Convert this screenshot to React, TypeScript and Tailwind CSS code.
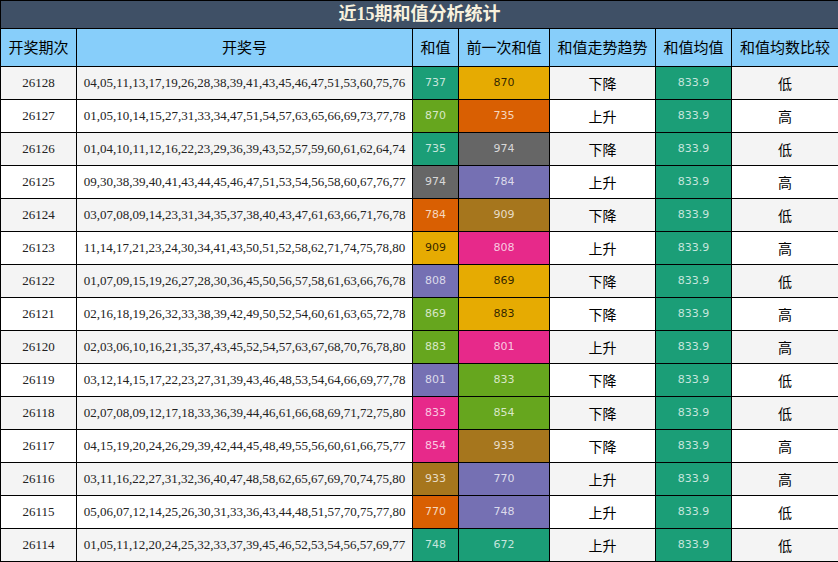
const C = {
  teal: "bg-[#1b9e77]",
  green: "bg-[#66a61e]",
  yellow: "bg-[#e6ab02]",
  orange: "bg-[#d95f02]",
  gray: "bg-[#666666]",
  purple: "bg-[#7570b3]",
  brown: "bg-[#a6761d]",
  pink: "bg-[#e7298a]",
};

type Row = {
  issue: string;
  nums: string;
  sum: number;
  sumBg: string;
  prev: number;
  prevBg: string;
  trend: string;
  cmp: string;
};

const rows: Row[] = [
  { issue: "26128", nums: "04,05,11,13,17,19,26,28,38,39,41,43,45,46,47,51,53,60,75,76", sum: 737, sumBg: C.teal, prev: 870, prevBg: C.yellow, trend: "下降", cmp: "低" },
  { issue: "26127", nums: "01,05,10,14,15,27,31,33,34,47,51,54,57,63,65,66,69,73,77,78", sum: 870, sumBg: C.green, prev: 735, prevBg: C.orange, trend: "上升", cmp: "高" },
  { issue: "26126", nums: "01,04,10,11,12,16,22,23,29,36,39,43,52,57,59,60,61,62,64,74", sum: 735, sumBg: C.teal, prev: 974, prevBg: C.gray, trend: "下降", cmp: "低" },
  { issue: "26125", nums: "09,30,38,39,40,41,43,44,45,46,47,51,53,54,56,58,60,67,76,77", sum: 974, sumBg: C.gray, prev: 784, prevBg: C.purple, trend: "上升", cmp: "高" },
  { issue: "26124", nums: "03,07,08,09,14,23,31,34,35,37,38,40,43,47,61,63,66,71,76,78", sum: 784, sumBg: C.orange, prev: 909, prevBg: C.brown, trend: "下降", cmp: "低" },
  { issue: "26123", nums: "11,14,17,21,23,24,30,34,41,43,50,51,52,58,62,71,74,75,78,80", sum: 909, sumBg: C.yellow, prev: 808, prevBg: C.pink, trend: "上升", cmp: "高" },
  { issue: "26122", nums: "01,07,09,15,19,26,27,28,30,36,45,50,56,57,58,61,63,66,76,78", sum: 808, sumBg: C.purple, prev: 869, prevBg: C.yellow, trend: "下降", cmp: "低" },
  { issue: "26121", nums: "02,16,18,19,26,32,33,38,39,42,49,50,52,54,60,61,63,65,72,78", sum: 869, sumBg: C.green, prev: 883, prevBg: C.yellow, trend: "下降", cmp: "高" },
  { issue: "26120", nums: "02,03,06,10,16,21,35,37,43,45,52,54,57,63,67,68,70,76,78,80", sum: 883, sumBg: C.green, prev: 801, prevBg: C.pink, trend: "上升", cmp: "高" },
  { issue: "26119", nums: "03,12,14,15,17,22,23,27,31,39,43,46,48,53,54,64,66,69,77,78", sum: 801, sumBg: C.purple, prev: 833, prevBg: C.green, trend: "下降", cmp: "低" },
  { issue: "26118", nums: "02,07,08,09,12,17,18,33,36,39,44,46,61,66,68,69,71,72,75,80", sum: 833, sumBg: C.pink, prev: 854, prevBg: C.green, trend: "下降", cmp: "低" },
  { issue: "26117", nums: "04,15,19,20,24,26,29,39,42,44,45,48,49,55,56,60,61,66,75,77", sum: 854, sumBg: C.pink, prev: 933, prevBg: C.brown, trend: "下降", cmp: "高" },
  { issue: "26116", nums: "03,11,16,22,27,31,32,36,40,47,48,58,62,65,67,69,70,74,75,80", sum: 933, sumBg: C.brown, prev: 770, prevBg: C.purple, trend: "上升", cmp: "高" },
  { issue: "26115", nums: "05,06,07,12,14,25,26,30,31,33,36,43,44,48,51,57,70,75,77,80", sum: 770, sumBg: C.orange, prev: 748, prevBg: C.purple, trend: "上升", cmp: "低" },
  { issue: "26114", nums: "01,05,11,12,20,24,25,32,33,37,39,45,46,52,53,54,56,57,69,77", sum: 748, sumBg: C.teal, prev: 672, prevBg: C.teal, trend: "上升", cmp: "低" },
];

const headers = ["开奖期次", "开奖号", "和值", "前一次和值", "和值走势趋势", "和值均值", "和值均数比较"];

function ValueCell({ value, bg }: { value: string | number; bg: string }) {
  // yellow cells carry dark text, the rest light
  const dark = bg === C.yellow;
  return (
    <td
      className={`${bg} border border-black text-center text-[11px] font-['DejaVu_Sans',sans-serif] ${
        dark ? "text-black/80" : "text-white/75"
      }`}
    >
      {value}
    </td>
  );
}

export default function App() {
  return (
    <div className="w-[838px] h-[562px] bg-white">
      <table className="w-[838px] table-fixed border-collapse border border-black text-[#222]">
        <colgroup>
          <col className="w-[76px]" />
          <col className="w-[336px]" />
          <col className="w-[46px]" />
          <col className="w-[91px]" />
          <col className="w-[106px]" />
          <col className="w-[76px]" />
          <col className="w-[107px]" />
        </colgroup>
        <thead>
          <tr className="h-[28px]">
            <th
              colSpan={7}
              className="bg-[#3f5066] border border-black text-center text-[18px] font-bold text-[#f8f1de] font-['Liberation_Serif','Noto_Sans_CJK_SC',serif]"
            >
              近15期和值分析统计
            </th>
          </tr>
          <tr className="h-[38px] bg-[#87cefa]">
            {headers.map((h) => (
              <th
                key={h}
                className="border border-black text-center text-[15px] font-normal text-black font-['Noto_Sans_CJK_SC',sans-serif]"
              >
                {h}
              </th>
            ))}
          </tr>
        </thead>
        <tbody>
          {rows.map((r, i) => (
            <tr key={r.issue} className={`h-[33px] ${i % 2 === 0 ? "bg-[#f4f4f4]" : "bg-white"}`}>
              <td className="border border-black text-center text-[13px] font-['Liberation_Serif',serif]">{r.issue}</td>
              <td className="border border-black text-center text-[13px] font-['Liberation_Serif',serif] whitespace-nowrap">
                {r.nums}
              </td>
              <ValueCell value={r.sum} bg={r.sumBg} />
              <ValueCell value={r.prev} bg={r.prevBg} />
              <td className="border border-black text-center text-[14px] text-black font-['Noto_Sans_CJK_SC',sans-serif]">
                {r.trend}
              </td>
              <ValueCell value="833.9" bg={C.teal} />
              <td className="border border-black text-center text-[14px] text-black font-['Noto_Sans_CJK_SC',sans-serif]">
                {r.cmp}
              </td>
            </tr>
          ))}
        </tbody>
      </table>
    </div>
  );
}
